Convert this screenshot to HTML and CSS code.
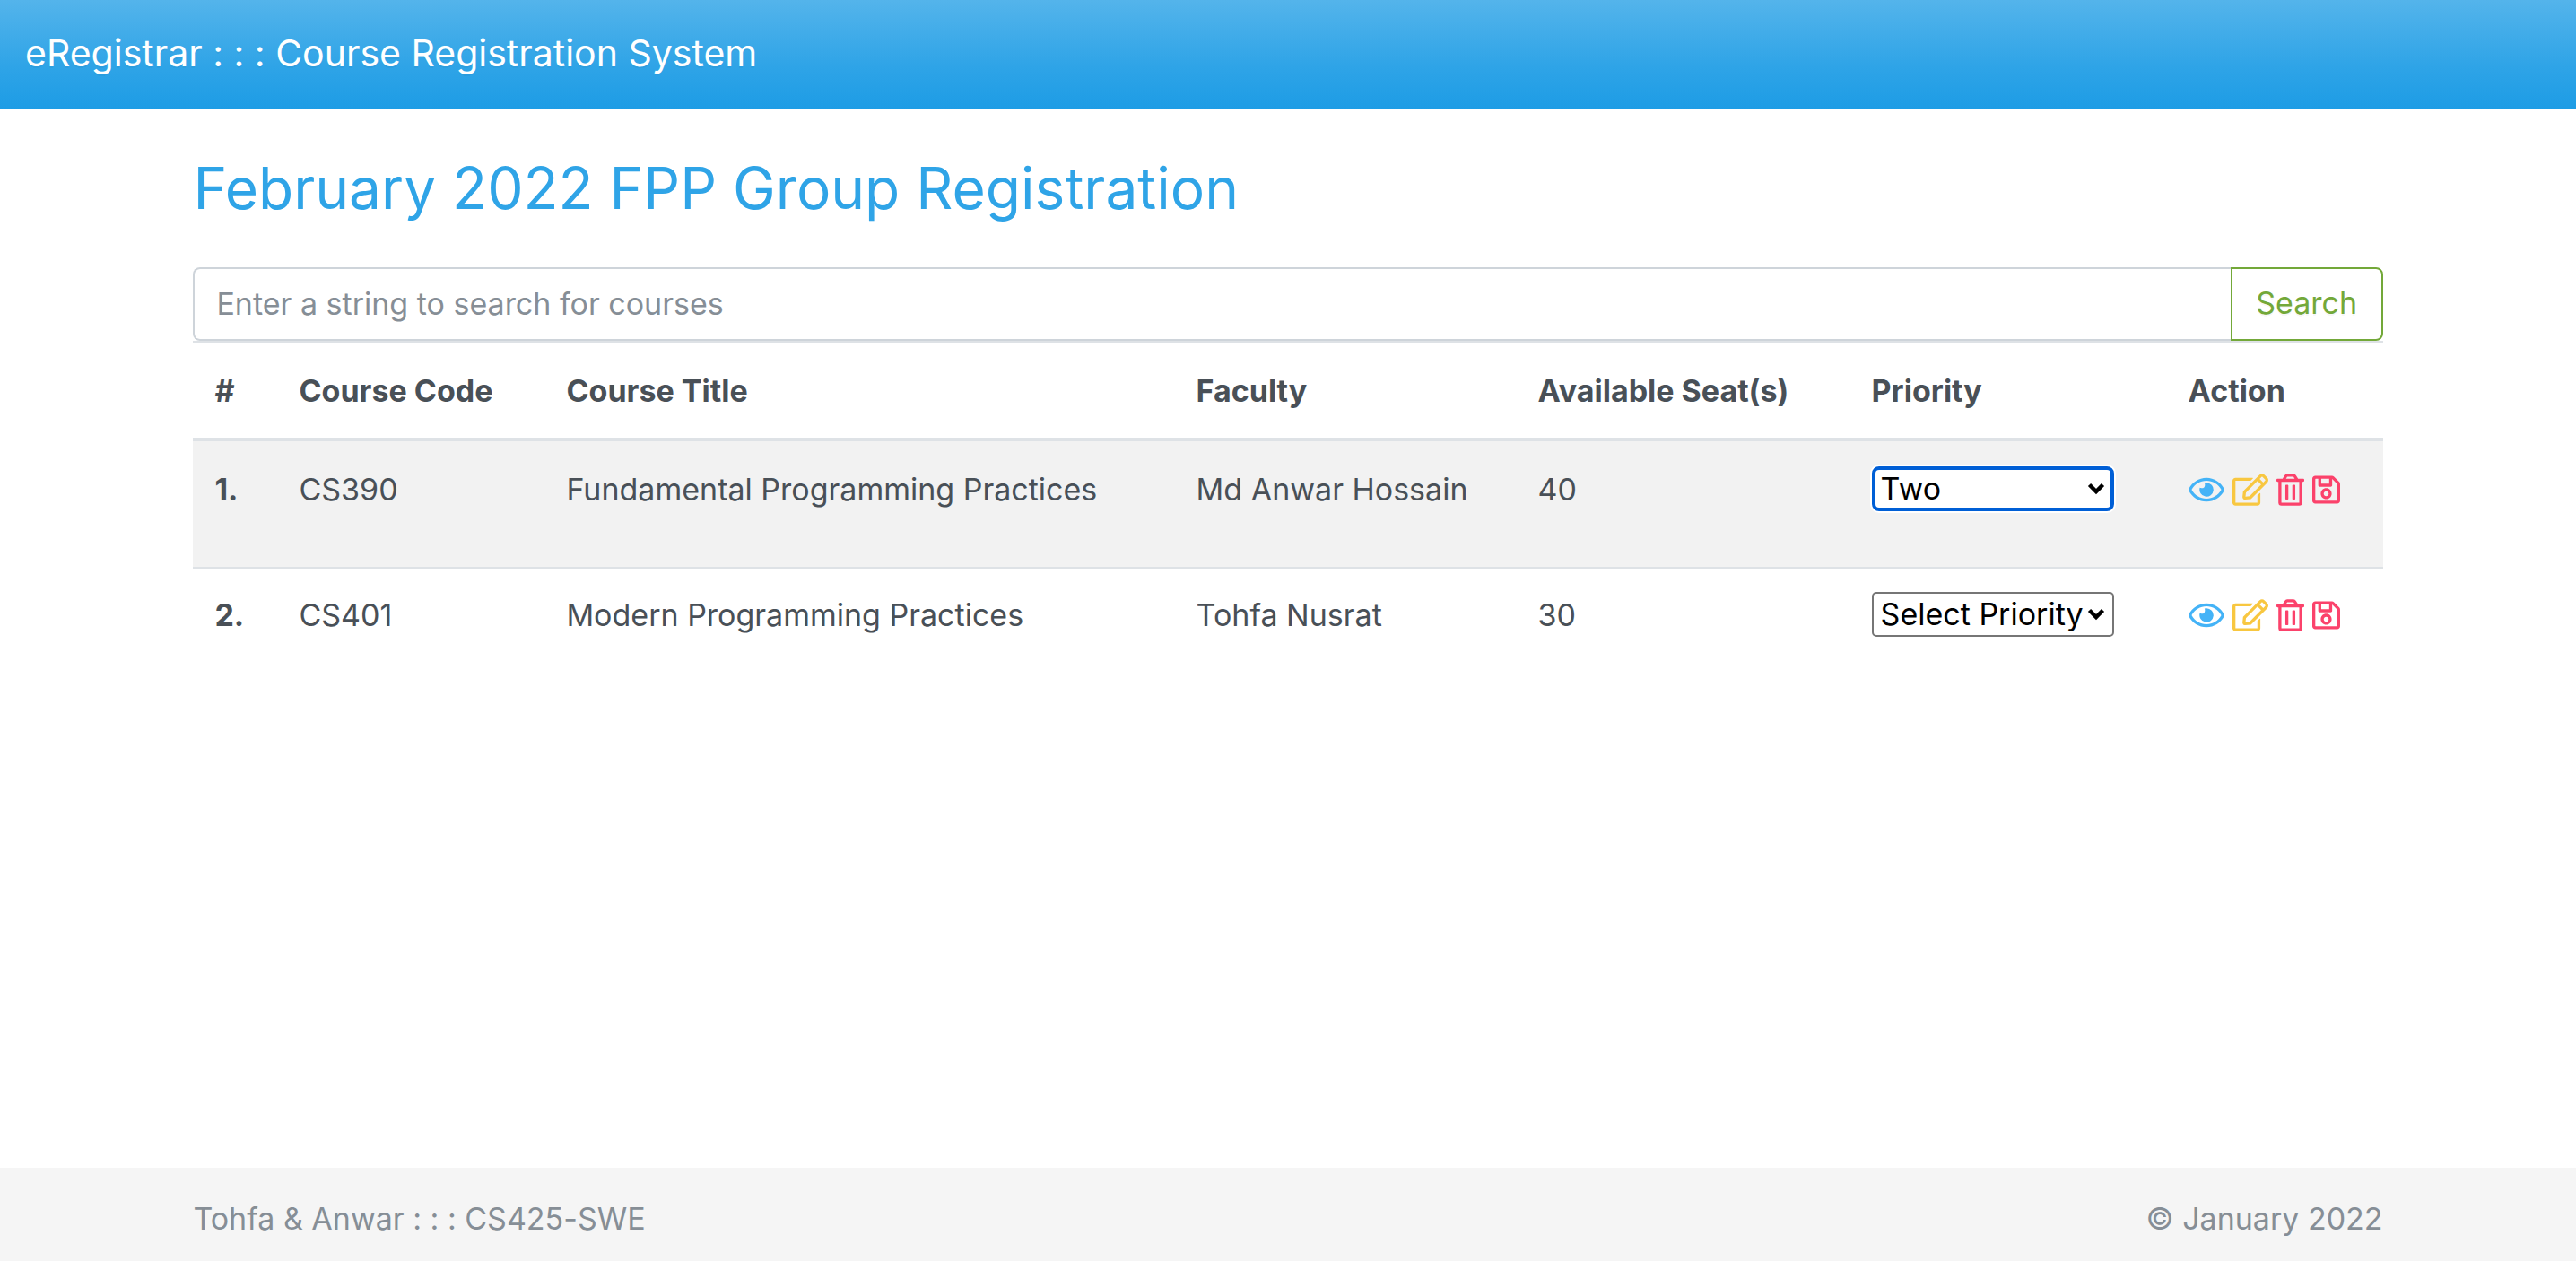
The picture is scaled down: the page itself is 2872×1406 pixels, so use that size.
FILE: index.html
```html
<!DOCTYPE html>
<html lang="en">
<head>
  <meta charset="utf-8">
  <title>eRegistrar</title>
  <link rel="stylesheet" href="styles.css">
</head>
<body>
  <svg class="sprite" aria-hidden="true">
    <symbol id="eye" viewBox="0 0 576 512"><path d="M288 144a110.94 110.94 0 0 0-31.24 5 55.4 55.4 0 0 1 7.24 27 56 56 0 0 1-56 56 55.4 55.4 0 0 1-27-7.24A111.71 111.71 0 1 0 288 144zm284.52 97.4C518.29 135.59 410.93 64 288 64S57.68 135.64 3.48 241.41a32.35 32.35 0 0 0 0 29.19C57.71 376.41 165.07 448 288 448s230.32-71.64 284.52-177.41a32.35 32.35 0 0 0 0-29.19zM288 400c-98.65 0-189.09-55-237.93-144C98.91 167 189.34 112 288 112s189.09 55 237.93 144C477.1 345 386.66 400 288 400z"/></symbol>
    <symbol id="edit" viewBox="0 0 576 512"><path d="M402.3 344.9l32-32c5-5 13.7-1.5 13.7 5.7V464c0 26.5-21.5 48-48 48H48c-26.5 0-48-21.5-48-48V112c0-26.5 21.5-48 48-48h273.5c7.1 0 10.7 8.6 5.7 13.7l-32 32c-1.5 1.5-3.5 2.3-5.7 2.3H48v352h352V350.5c0-2.1.8-4.1 2.3-5.6zm156.6-201.8L296.3 405.7l-90.4 10c-26.2 2.9-48.5-19.2-45.6-45.6l10-90.4L432.9 17.1c22.9-22.9 59.9-22.9 82.7 0l43.2 43.2c22.9 22.9 22.9 60 .1 82.8zM460.1 174L402 115.9 216.2 301.8l-7.3 65.3 65.3-7.3L460.1 174zm64.8-79.7l-43.2-43.2c-4.1-4.1-10.8-4.1-14.8 0L436 82l58.1 58.1 30.9-30.9c4-4.2 4-10.8-.1-14.9z"/></symbol>
    <symbol id="trash" viewBox="0 0 448 512"><path d="M268 416h24a12 12 0 0 0 12-12V188a12 12 0 0 0-12-12h-24a12 12 0 0 0-12 12v216a12 12 0 0 0 12 12zM432 80h-82.41l-34-56.7A48 48 0 0 0 274.41 0H173.59a48 48 0 0 0-41.16 23.3L98.41 80H16A16 16 0 0 0 0 96v16a16 16 0 0 0 16 16h16v336a48 48 0 0 0 48 48h288a48 48 0 0 0 48-48V128h16a16 16 0 0 0 16-16V96a16 16 0 0 0-16-16zM171.84 50.91A6 6 0 0 1 177 48h94a6 6 0 0 1 5.15 2.91L293.61 80H154.39zM368 464H80V128h288zm-212-48h24a12 12 0 0 0 12-12V188a12 12 0 0 0-12-12h-24a12 12 0 0 0-12 12v216a12 12 0 0 0 12 12z"/></symbol>
    <symbol id="save" viewBox="0 0 448 512"><path d="M433.941 129.941l-83.882-83.882A48 48 0 0 0 316.118 32H48C21.49 32 0 53.49 0 80v352c0 26.51 21.49 48 48 48h352c26.51 0 48-21.49 48-48V163.882a48 48 0 0 0-14.059-33.941zM272 80v80H144V80h128zm122 352H54a6 6 0 0 1-6-6V86a6 6 0 0 1 6-6h42v104c0 13.255 10.745 24 24 24h176c13.255 0 24-10.745 24-24V83.882l78.243 78.243a6 6 0 0 1 1.757 4.243V426a6 6 0 0 1-6 6zM224 232c-48.523 0-88 39.477-88 88s39.477 88 88 88 88-39.477 88-88-39.477-88-88-88zm0 128c-22.056 0-40-17.944-40-40s17.944-40 40-40 40 17.944 40 40-17.944 40-40 40z"/></symbol>
    <symbol id="chevron" viewBox="0 0 20 14"><path d="M2.500 2.500l7.500 7.500 7.500-7.500" fill="none" stroke="#000" stroke-width="4.500"/></symbol>
  </svg>

  <header class="navbar">
    <a class="brand" href="#">eRegistrar : : : Course Registration System</a>
  </header>

  <main class="container main">
    <h1 class="title">February 2022 FPP Group Registration</h1>

    <form class="search">
      <input class="search-input" type="text" placeholder="Enter a string to search for courses" aria-label="Search courses">
      <button class="search-button" type="button">Search</button>
    </form>

    <table class="courses">
      <colgroup>
        <col class="col-num"><col class="col-code"><col><col class="col-faculty"><col class="col-seats"><col class="col-priority"><col class="col-action">
      </colgroup>
      <thead>
        <tr>
          <th scope="col">#</th>
          <th scope="col">Course Code</th>
          <th scope="col">Course Title</th>
          <th scope="col">Faculty</th>
          <th scope="col">Available Seat(s)</th>
          <th scope="col">Priority</th>
          <th scope="col">Action</th>
        </tr>
      </thead>
      <tbody>
        <tr>
          <th scope="row">1.</th>
          <td>CS390</td>
          <td>Fundamental Programming Practices</td>
          <td>Md Anwar Hossain</td>
          <td>40</td>
          <td>
            <div class="picker">
              <select class="picker-select is-active" aria-label="Priority for CS390">
                <option>Select Priority</option>
                <option>One</option>
                <option selected>Two</option>
              </select>
              <svg class="picker-arrow" aria-hidden="true"><use href="#chevron"/></svg>
            </div>
          </td>
          <td>
            <div class="actions">
              <a class="view" href="#" aria-label="View"><svg class="icon icon-wide"><use href="#eye"/></svg></a>
              <a class="edit" href="#" aria-label="Edit"><svg class="icon icon-wide"><use href="#edit"/></svg></a>
              <a class="danger" href="#" aria-label="Delete"><svg class="icon"><use href="#trash"/></svg></a>
              <a class="danger" href="#" aria-label="Save"><svg class="icon"><use href="#save"/></svg></a>
            </div>
          </td>
        </tr>
        <tr>
          <th scope="row">2.</th>
          <td>CS401</td>
          <td>Modern Programming Practices</td>
          <td>Tohfa Nusrat</td>
          <td>30</td>
          <td>
            <div class="picker">
              <select class="picker-select" aria-label="Priority for CS401">
                <option selected>Select Priority</option>
                <option>One</option>
                <option>Two</option>
              </select>
              <svg class="picker-arrow" aria-hidden="true"><use href="#chevron"/></svg>
            </div>
          </td>
          <td>
            <div class="actions">
              <a class="view" href="#" aria-label="View"><svg class="icon icon-wide"><use href="#eye"/></svg></a>
              <a class="edit" href="#" aria-label="Edit"><svg class="icon icon-wide"><use href="#edit"/></svg></a>
              <a class="danger" href="#" aria-label="Delete"><svg class="icon"><use href="#trash"/></svg></a>
              <a class="danger" href="#" aria-label="Save"><svg class="icon"><use href="#save"/></svg></a>
            </div>
          </td>
        </tr>
      </tbody>
    </table>
  </main>

  <footer class="footer">
    <div class="container footer-row">
      <span>Tohfa &amp; Anwar : : : CS425-SWE</span>
      <span>© January 2022</span>
    </div>
  </footer>
</body>
</html>
```
FILE: styles.css
```css
* {
  box-sizing: border-box;
}

body {
  display: flex;
  flex-direction: column;
  min-height: 100vh;
  margin: 0;
  background: #fff;
  color: #495057;
  font-family: Inter, "Liberation Sans", sans-serif;
  font-size: 34px;
  font-variant-ligatures: no-contextual;
  line-height: 54px;
}

.sprite {
  display: none;
}

.container {
  width: 85%;
  margin: 0 auto;
}

.navbar {
  padding: 32px 28px 36px;
  background: linear-gradient(#54b4eb, #2fa4e7 60%, #1d9ce5);
}

.brand {
  display: block;
  color: #fff;
  font-size: 41px;
  text-decoration: none;
  text-shadow: 0 2px 0 rgba(0, 0, 0, 0.05);
}

.main {
  flex: 1;
}

.title {
  margin: 44px 0;
  color: #2fa4e7;
  font-size: 64px;
  font-weight: 400;
  line-height: 88px;
}

.search {
  display: flex;
}

.search-input,
.search-button {
  height: 82px;
  border: 2px solid #ced4da;
  background: #fff;
  font: inherit;
}

.search-input {
  flex: 1;
  min-width: 0;
  padding: 0 24px 2px;
  border-right: 0;
  border-radius: 8px 0 0 8px;
  color: #495057;
}

.search-input::placeholder {
  color: #868e96;
}

.search-button {
  width: 170px;
  padding: 0 0 2px;
  border-color: #73a839;
  border-radius: 0 8px 8px 0;
  color: #73a839;
  text-shadow: 0 2px 0 rgba(0, 0, 0, 0.05);
}

.courses {
  width: 100%;
  border-collapse: separate;
  border-spacing: 0;
  table-layout: fixed;
  line-height: 56px;
}

.col-num { width: 94px; }
.col-code { width: 298px; }
.col-faculty { width: 381px; }
.col-seats { width: 372px; }
.col-priority { width: 353px; }
.col-action { width: 241px; }

.courses th,
.courses td {
  padding: 24px 0 0 24px;
  border-top: 2px solid #dee2e6;
  text-align: left;
  vertical-align: top;
  white-space: nowrap;
}

.courses th {
  font-weight: 700;
}

.courses thead th {
  padding-top: 26px;
  padding-bottom: 24px;
  border-bottom: 2px solid #dee2e6;
}

.courses tbody tr {
  height: 142px;
}

.courses tbody tr:first-child > * {
  padding-top: 26px;
}

.courses tbody tr:nth-child(odd) {
  background: #f2f2f2;
}

.picker {
  display: grid;
  grid-template-columns: 100%;
  width: 270px;
  padding-top: 2px;
}

.picker-select {
  grid-area: 1 / 1;
  width: 100%;
  height: 50px;
  padding: 0 30px 0 8px;
  appearance: none;
  border: 2px solid #767676;
  border-radius: 5px;
  background: #fff;
  color: #000;
  font: inherit;
  line-height: 46px;
}

.picker-select.is-active {
  padding: 0 28px 0 6px;
  border: 4px solid #005fd6;
  border-radius: 8px;
  box-shadow: 0 0 0 2px #fff;
  line-height: 42px;
}

.picker-arrow {
  grid-area: 1 / 1;
  align-self: center;
  justify-self: end;
  width: 20px;
  height: 14px;
  margin-right: 10px;
  pointer-events: none;
}

.actions {
  display: flex;
  align-items: center;
  gap: 9px;
  height: 56px;
}

.actions a {
  display: flex;
}

.icon {
  width: 31px;
  height: 36px;
  fill: currentColor;
}

.icon-wide {
  width: 40px;
}

.view { color: #44b3f7; }
.edit { color: #f8c740; }
.danger { color: #fb426b; }

.footer {
  padding: 30px 0 20px;
  background: #f5f5f5;
  color: #868e96;
}

.footer-row {
  display: flex;
  justify-content: space-between;
}
```
